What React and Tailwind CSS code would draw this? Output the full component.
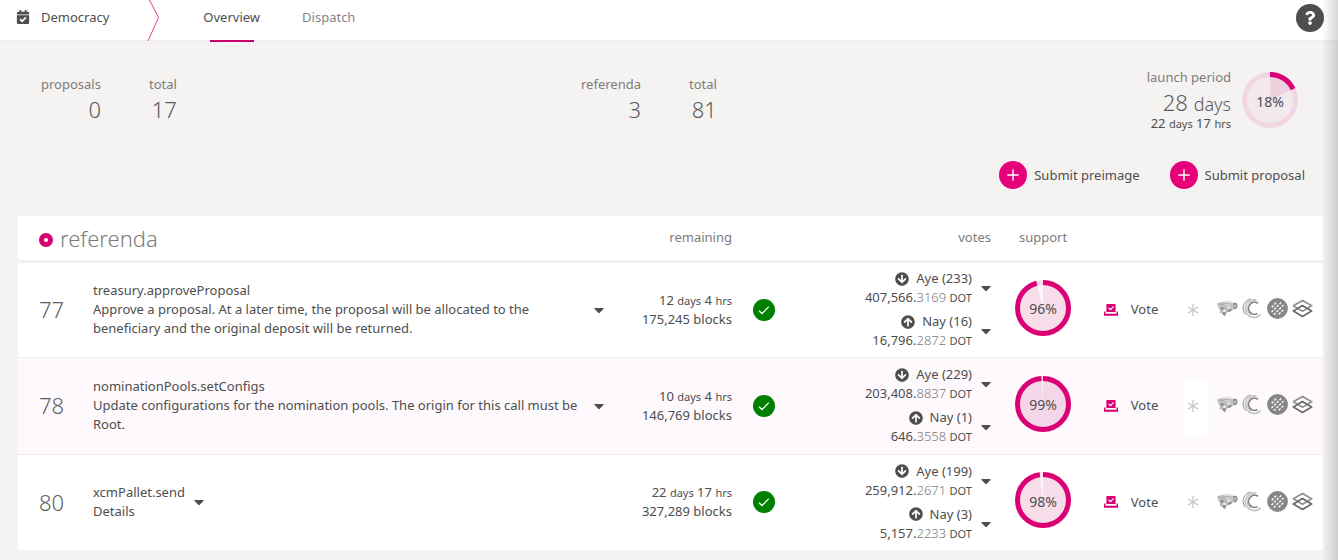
import { FaArrowCircleDown, FaArrowCircleUp, FaCalendarCheck, FaCaretDown, FaQuestion } from 'react-icons/fa';

const REFERENDA = [
  {
    id: 77,
    call: 'treasury.approveProposal',
    details: 'Approve a proposal. At a later time, the proposal will be allocated to the beneficiary and the original deposit will be returned.',
    days: 12, hours: 4, blocks: '175,245',
    votes: [
      { kind: 'Aye', count: 233, whole: '407,566', fraction: '3169' },
      { kind: 'Nay', count: 16, whole: '16,796', fraction: '2872' },
    ],
    support: 96,
  },
  {
    id: 78,
    call: 'nominationPools.setConfigs',
    details: 'Update configurations for the nomination pools. The origin for this call must be Root.',
    days: 10, hours: 4, blocks: '146,769',
    votes: [
      { kind: 'Aye', count: 229, whole: '203,408', fraction: '8837' },
      { kind: 'Nay', count: 1, whole: '646', fraction: '3558' },
    ],
    support: 99,
  },
  {
    id: 80,
    call: 'xcmPallet.send',
    details: 'Details',
    days: 22, hours: 17, blocks: '327,289',
    votes: [
      { kind: 'Aye', count: 199, whole: '259,912', fraction: '2671' },
      { kind: 'Nay', count: 3, whole: '5,157', fraction: '2233' },
    ],
    support: 98,
  },
];

function Duration({ days, hours }) {
  return (
    <>
      {days} <span className="text-[11px]">days</span> {hours} <span className="text-[11px]">hrs</span>
    </>
  );
}

function Progress({ percent }) {
  const angle = (percent / 100) * 2 * Math.PI;
  const x = 28 + 28 * Math.sin(angle);
  const y = 28 - 28 * Math.cos(angle);
  const large = percent > 50 ? 1 : 0;
  return (
    <div className="relative size-14 shrink-0">
      <svg viewBox="0 0 56 56" className="size-14" aria-hidden="true">
        <circle cx="28" cy="28" r="28" fill="#d6006f" fillOpacity="0.04" />
        <circle cx="28" cy="28" r="25.5" fill="none" stroke="#e6007a" strokeOpacity="0.08" strokeWidth="5" />
        <path d={`M28 28V0A28 28 0 ${large} 1 ${x} ${y}Z`} fill="#c0006a" fillOpacity="0.1" />
        <circle cx="28" cy="28" r="25.5" fill="none" stroke="#dc0075" strokeWidth="5" pathLength="100" strokeDasharray={`${percent} 100`} transform="rotate(-90 28 28)" />
      </svg>
      <span className="absolute inset-0 flex items-center justify-center pt-[2px] text-[14px]">{percent}%</span>
    </div>
  );
}

function Stat({ label, value }) {
  return (
    <div className="text-right">
      <div className="leading-5 text-[#7c7c7c]">{label}</div>
      <div className="text-[22px] leading-[30px] font-light text-[#5a5a5a]">{value}</div>
    </div>
  );
}

function ActionButton({ children }) {
  return (
    <button type="button" className="flex items-center gap-[7px]">
      <span className="flex size-7 items-center justify-center rounded-full bg-[#e6007a]">
        <svg viewBox="0 0 12 12" className="size-3" fill="none" stroke="#fff" strokeWidth="1.4" aria-hidden="true">
          <path d="M6 0.3V11.7M0.3 6H11.7" />
        </svg>
      </span>
      {children}
    </button>
  );
}

function ExpandButton({ label }) {
  return (
    <button type="button" aria-label={label} className="shrink-0">
      <FaCaretDown className="size-4" />
    </button>
  );
}

function Vote({ kind, count, whole, fraction }) {
  const Arrow = kind === 'Aye' ? FaArrowCircleDown : FaArrowCircleUp;
  return (
    <div className="flex items-center justify-end gap-[6px]">
      <div>
        <div className="flex items-center justify-end gap-[7px]">
          <Arrow className="size-[14px]" />
          {kind} ({count})
        </div>
        <div>
          {whole}.<span className="font-light opacity-75">{fraction}</span> <span className="text-[11px]">DOT</span>
        </div>
      </div>
      <ExpandButton label={`Show ${kind} votes`} />
    </div>
  );
}

function BallotIcon() {
  return (
    <svg viewBox="0 0 14 12" className="h-3 w-[14px]" aria-hidden="true">
      <path d="M3.2 0H10.8Q11.6 0 11.6 0.8V8H2.4V0.8Q2.4 0 3.2 0Z" fill="#d6006f" />
      <path d="M0.7 7.6V11H13.3V7.6M0.7 10.4H13.3" fill="none" stroke="#d6006f" strokeWidth="1.4" />
      <path d="M4.6 3.9L6.4 5.6L9.6 2.4" fill="none" stroke="#fff" strokeWidth="1.2" />
    </svg>
  );
}

function BrainLogo() {
  return (
    <svg viewBox="0 -8 62 62" className="size-[21px]" aria-hidden="true">
      <path d="M1 8L10 4L22 3L34 0L46 5L58 7L61 16L56 26L48 26L40 31L30 34L24 45L17 41L10 36L7 24L2 16Z" fill="#c4c4c4" />
      <path d="M22 3L34 0L46 5L40 14L26 12ZM28 16L40 16L38 26L30 26Z" fill="#dedede" />
      <path d="M48 7L58 7L61 16L56 25L49 21ZM7 22L16 18L22 22L16 28ZM17 34L26 33L24 45L17 41ZM34 26L46 24L40 31L30 34Z" fill="#8c8c8c" />
      <circle cx="22" cy="30" r="4" fill="#eee" />
      <circle cx="54" cy="15" r="3" fill="#dcdcdc" />
      <path d="M3 9L14 12L26 8L44 10M10 36L14 26L26 20L32 30" fill="none" stroke="#a0a0a0" strokeWidth="2.4" />
    </svg>
  );
}

function CrescentLogo() {
  return (
    <svg viewBox="0 0 21 21" className="size-[21px]" fill="none" aria-hidden="true">
      <path d="M14.5 2.2A8.8 8.8 0 1 0 18.6 16.8" stroke="#c9c9c9" strokeWidth="2" />
      <path d="M8.5 1A9.4 9.4 0 0 0 3.4 16.4" stroke="#8f8f8f" strokeWidth="1" />
      <path d="M16 5.4A6 6 0 1 0 15.4 15.6" stroke="#777" strokeWidth="1.5" />
      <path d="M13 3.4A7.4 7.4 0 0 0 9 17" stroke="#ababab" strokeWidth="0.9" />
    </svg>
  );
}

function DotsLogo() {
  return (
    <svg viewBox="0 0 21 21" className="size-[21px]" aria-hidden="true">
      <circle cx="10.5" cy="10.5" r="10.4" fill="#878787" />
      <g transform="translate(10.5 10.5) rotate(-45)" stroke="#fff" strokeWidth="1.4" strokeDasharray="2.3 1.5">
        <path d="M-3.1 -5H3.1M-6.8 -1.7H6.8M-6.8 1.7H6.8M-3.1 5H3.1" />
      </g>
    </svg>
  );
}

function LayersLogo() {
  return (
    <svg viewBox="0 0 21 21" className="size-[21px]" fill="none" strokeWidth="1.8" strokeLinejoin="round" aria-hidden="true">
      <path d="M10.5 2.4L19.6 7.8L10.5 13.2L1.4 7.8Z" stroke="#929292" />
      <path d="M10.5 7.6L19.6 13L10.5 18.4L1.4 13Z" stroke="#6c6c6c" />
    </svg>
  );
}

const EXPLORERS = [
  ['Explorer', BrainLogo],
  ['Commonwealth', CrescentLogo],
  ['Polkassembly', DotsLogo],
  ['Subsquare', LayersLogo],
];

function ReferendumRow({ item, index }) {
  const striped = index % 2 === 1;
  return (
    <tr className={striped ? 'h-[97px] border-t border-[#efecef] bg-[#fdf9fd]' : 'h-24 border-t border-[#efecef] bg-white'}>
      <td className="pl-[21px] text-[22px] font-light text-[#606060]">{item.id}</td>
      <td>
        <div className="flex items-center gap-[6px]">
          <div className="max-w-[492px]">
            <div>{item.call}</div>
            <div>{item.details}</div>
          </div>
          <ExpandButton label={`Show details of referendum ${item.id}`} />
        </div>
      </td>
      <td className="pr-4 text-right">
        <div><Duration days={item.days} hours={item.hours} /></div>
        <div>{item.blocks} blocks</div>
      </td>
      <td>
        <span className="mx-auto flex size-[22px] items-center justify-center rounded-full bg-[#008000]">
          <svg viewBox="0 0 12 12" className="size-3" fill="none" stroke="#fff" strokeWidth="1.3" role="img" aria-label="Passing">
            <path d="M1 6.8L4 9.6L10.8 2.6" />
          </svg>
        </span>
      </td>
      <td className="pr-[13px] text-right">
        <div className="flex flex-col gap-[5px]">
          {item.votes.map((vote) => <Vote key={vote.kind} {...vote} />)}
        </div>
      </td>
      <td><div className="flex justify-center pb-1"><Progress percent={item.support} /></div></td>
      <td>
        <button type="button" className="mx-auto flex items-center gap-[13px]">
          <BallotIcon />
          Vote
        </button>
      </td>
      <td className="pr-[10px]">
        <div className="flex items-center justify-end">
          <span className={striped ? 'mt-1 mr-[10px] flex h-[54px] w-6 items-center justify-center bg-white pr-1 pb-1' : 'mt-1 mr-[10px] flex h-[54px] w-6 items-center justify-center pr-1 pb-1'}>
            <svg viewBox="0 0 12 12" className="size-3" fill="none" stroke="#c2c2c2" strokeWidth="1.1" aria-hidden="true">
              <path d="M6 0V12M0.8 3L11.2 9M11.2 3L0.8 9" />
            </svg>
          </span>
          <div className="flex gap-1 pb-[2px]">
            {EXPLORERS.map(([name, Logo]) => (
              <a key={name} href="#" aria-label={name}><Logo /></a>
            ))}
          </div>
        </div>
      </td>
    </tr>
  );
}

export default function App() {
  return (
    <div className="relative min-h-screen bg-[#f4f3f2] font-['Noto_Sans','Open_Sans',sans-serif] text-[13px] leading-[19px] text-[#4e4e4e]">
      <header className="flex h-[41px] items-start border-b border-[#ededed] bg-white pr-[14px] pl-4">
        <div className="flex h-[34px] items-center gap-[11px]">
          <FaCalendarCheck className="size-[14px]" />
          <span>Democracy</span>
        </div>
        <svg viewBox="0 0 14 41" className="ml-[38px] h-[41px] w-[14px]" fill="none" stroke="#e0409a" aria-hidden="true">
          <path d="M2.5 0L11.5 17.5L1 41" />
        </svg>
        <nav className="ml-[42px] flex">
          <a href="#" className="flex h-[42px] flex-col items-center justify-between pt-2">
            Overview
            <span className="h-[2px] w-11 bg-[#c8006f]" />
          </a>
          <a href="#" className="ml-[42px] pt-2 text-[#858585]">Dispatch</a>
        </nav>
        <button type="button" aria-label="Help" className="mt-1 ml-auto flex size-7 items-center justify-center rounded-full bg-[#4e4e4e] text-white">
          <FaQuestion className="size-[14px]" />
        </button>
      </header>

      <main className="pr-[15px] pl-[18px]">
        <section className="grid grid-cols-[1fr_1fr_177px] pt-[27px] pr-[25px] pl-[23px]">
          <div className="flex gap-12 pt-[6px]">
            <Stat label="proposals" value="0" />
            <Stat label="total" value="17" />
          </div>
          <div className="flex gap-12 pt-[6px]">
            <Stat label="referenda" value="3" />
            <Stat label="total" value="81" />
          </div>
          <div className="flex items-start justify-end gap-[11px]">
            <div className="text-right">
              <div className="text-[#7c7c7c]">launch period</div>
              <div className="text-[22px] leading-[30px] font-light text-[#5a5a5a]">28 <span className="text-[18px]">days</span></div>
              <div className="-mt-1 leading-4"><Duration days={22} hours={17} /></div>
            </div>
            <div className="pt-1"><Progress percent={18} /></div>
          </div>
        </section>

        <div className="mt-[29px] flex justify-end gap-[30px] pr-[18px]">
          <ActionButton>Submit preimage</ActionButton>
          <ActionButton>Submit proposal</ActionButton>
        </div>

        <table className="mt-[27px] w-full table-fixed border-collapse bg-white">
          <colgroup>
            <col className="w-[75px]" />
            <col />
            <col className="w-[137px]" />
            <col className="w-8" />
            <col className="w-[227px]" />
            <col className="w-[72px]" />
            <col className="w-[104px]" />
            <col className="w-[140px]" />
          </colgroup>
          <thead>
            <tr className="h-[45px] border-b-[3px] border-[#f1f1f0] text-[#7c7c7c]">
              <th colSpan={2} className="pl-[21px] text-left font-normal">
                <h1 className="flex items-center gap-[7px] text-[22px] leading-8 font-light">
                  <span className="mt-1 size-[14px] rounded-full border-[5px] border-[#d6006f] bg-white" />
                  referenda
                </h1>
              </th>
              <th className="pr-4 text-right font-normal">remaining</th>
              <td />
              <th className="pr-4 text-right font-normal">votes</th>
              <th className="text-center font-normal">support</th>
              <td />
              <td />
            </tr>
          </thead>
          <tbody>
            {REFERENDA.map((item, index) => <ReferendumRow key={item.id} item={item} index={index} />)}
          </tbody>
        </table>
      </main>
      <div className="pointer-events-none absolute inset-y-0 right-0 w-4 bg-linear-to-r from-transparent to-black/15" />
    </div>
  );
}
